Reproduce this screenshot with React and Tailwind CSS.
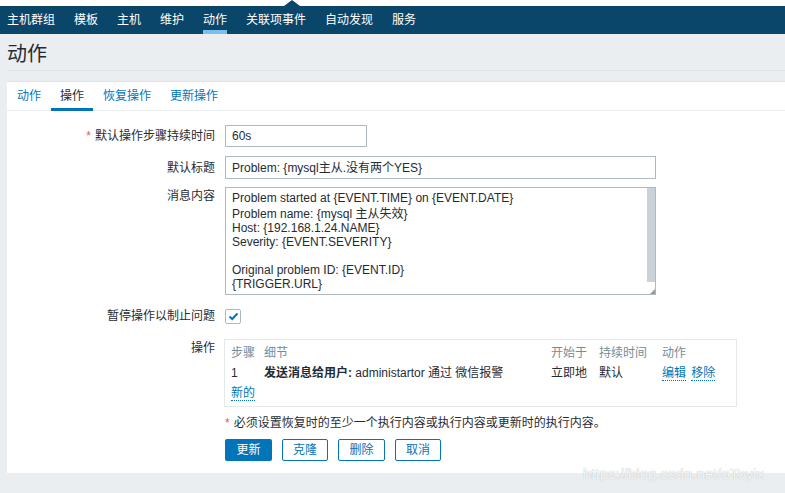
import React from 'react';

const nav = ['主机群组', '模板', '主机', '维护', '动作', '关联项事件', '自动发现', '服务'];
const tabs = ['动作', '操作', '恢复操作', '更新操作'];
const message = [
  'Problem started at {EVENT.TIME} on {EVENT.DATE}',
  'Problem name: {mysql 主从失效}',
  'Host: {192.168.1.24.NAME}',
  'Severity: {EVENT.SEVERITY}',
  '',
  'Original problem ID: {EVENT.ID}',
  '{TRIGGER.URL}',
];

const Row = ({ label, required, children, top = 'items-center' }) => (
  <div className={`flex ${top}`}>
    <div className="w-[209px] shrink-0 text-right pr-[1px]">
      {required && <span className="text-[#e45959] mr-[4px]">*</span>}
      {label}
    </div>
    <div className="ml-[9px]">{children}</div>
  </div>
);

const Link = ({ children }) => (
  <span className="text-[#0275b8] border-b border-dotted border-[#0275b8] leading-[13px] inline-block">{children}</span>
);

export default function App() {
  return (
    <div className="relative w-[785px] h-[493px] overflow-hidden bg-[#ebeef0] text-[12px] text-[#1f2c33] font-['Liberation_Sans','Noto_Sans_CJK_SC',sans-serif]">
      {/* top strip with notch */}
      <div className="relative h-[6px] bg-white">
        <div className="absolute left-[284px] bottom-0 w-0 h-0 border-l-[8px] border-r-[8px] border-b-[6px] border-l-transparent border-r-transparent border-b-[#0a466a]" />
      </div>
      <div className="h-[28px] bg-[#0a466a] flex items-stretch pl-[7px] gap-[19px] text-white">
        {nav.map(n => (
          <div key={n} className="relative flex items-center">
            {n}
            {n === '动作' && <div className="absolute left-0 right-0 bottom-0 h-[4px] bg-[#78c1ee]" />}
          </div>
        ))}
      </div>

      <div className="ml-[7px] h-[37px] border-b border-[#dfe4e7] flex items-center">
        <h1 className="text-[20px] text-[#1f2c33] leading-none mt-[4px]">动作</h1>
      </div>

      <div className="ml-[7px] mt-[10px] h-[392px] bg-white border-t border-[#dfe4e7]">
        <div className="h-[29px] border-b border-[#ebeef0] flex pl-[1px] gap-[1px]">
          {tabs.map(t => (
            <div key={t} className={`relative px-[9px] flex items-center ${t === '操作' ? 'text-[#1f2c33]' : 'text-[#0275b8]'}`}>
              {t}
              {t === '操作' && <div className="absolute left-0 right-0 bottom-[-1px] h-[3px] bg-[#0275b8]" />}
            </div>
          ))}
        </div>

        <div className="pt-[14px]">
          <Row label="默认操作步骤持续时间" required>
            <div className="w-[142px] h-[22px] border border-[#acbbc2] px-[6px] flex items-center">60s</div>
          </Row>
          <div className="mt-[9px]">
            <Row label="默认标题">
              <div className="w-[431px] h-[23px] border border-[#acbbc2] px-[6px] flex items-center">Problem: {'{'}mysql主从.没有两个YES{'}'}</div>
            </Row>
          </div>
          <div className="mt-[8px]">
            <Row label="消息内容" top="items-start">
              <div className="relative w-[431px] h-[108px] border border-[#acbbc2] pl-[6px] pt-[3px]">
                {message.map((l, i) => (
                  <div key={i} className={`h-[14px] leading-[14px] ${i === 1 ? 'mt-[2px]' : ''}`}>{l}</div>
                ))}
                <div className="absolute right-0 top-0 w-[8px] h-[94px] bg-[#c8d2d8]" />
                <div className="absolute right-0 bottom-0 w-[8px] h-[8px] bg-white text-[5px] leading-none text-[#999] flex items-end justify-end">◢</div>
              </div>
            </Row>
          </div>
          <div className="mt-[12px]">
            <Row label="暂停操作以制止问题">
              <div className="w-[16px] h-[15px] border border-[#acbbc2] rounded-[2px] flex items-center justify-center">
                <svg width="11" height="9" viewBox="0 0 11 9"><path d="M1.5 4.5 L4.2 7 L9.5 1.5" fill="none" stroke="#0275b8" strokeWidth="2" /></svg>
              </div>
            </Row>
          </div>
          <div className="mt-[14px]">
            <Row label="操作" top="items-start">
              <div className="w-[513px] h-[68px] border border-[#e4e9eb] -ml-[1px] pl-[6px] pt-[4px]">
                <table className="border-collapse text-left">
                  <tbody>
                    <tr className="text-[#768d99] h-[18px]">
                      <td className="w-[33px]">步骤</td>
                      <td className="w-[287px]">细节</td>
                      <td className="w-[48px]">开始于</td>
                      <td className="w-[63px]">持续时间</td>
                      <td>动作</td>
                    </tr>
                    <tr className="h-[22px]">
                      <td>1</td>
                      <td><b>发送消息给用户:</b> administartor 通过 微信报警</td>
                      <td>立即地</td>
                      <td>默认</td>
                      <td><Link>编辑</Link> <span className="ml-[2px]"><Link>移除</Link></span></td>
                    </tr>
                    <tr className="h-[18px]">
                      <td colSpan={5}><Link>新的</Link></td>
                    </tr>
                  </tbody>
                </table>
              </div>
            </Row>
          </div>
          <div className="ml-[218px] mt-[9px] h-[14px] leading-[14px]">
            <span className="text-[#e45959] mr-[4px]">*</span>必须设置恢复时的至少一个执行内容或执行内容或更新时的执行内容。
          </div>
          <div className="ml-[218px] mt-[9px] flex gap-[10px]">
            <button className="w-[47px] h-[22px] bg-[#0275b8] text-white rounded-[2px]">更新</button>
            <button className="w-[46px] h-[22px] border border-[#0275b8] text-[#0275b8] rounded-[2px]">克隆</button>
            <button className="w-[47px] h-[22px] border border-[#0275b8] text-[#0275b8] rounded-[2px]">删除</button>
            <button className="w-[46px] h-[22px] border border-[#0275b8] text-[#0275b8] rounded-[2px]">取消</button>
          </div>
        </div>
      </div>

      <div className="absolute left-[583px] top-[465px] text-[15px] leading-[18px] text-white/90 [text-shadow:0_0_1px_#9aa4aa] font-['Liberation_Sans',sans-serif]">
        https://blog.csdn.net/oToyix
      </div>
    </div>
  );
}
